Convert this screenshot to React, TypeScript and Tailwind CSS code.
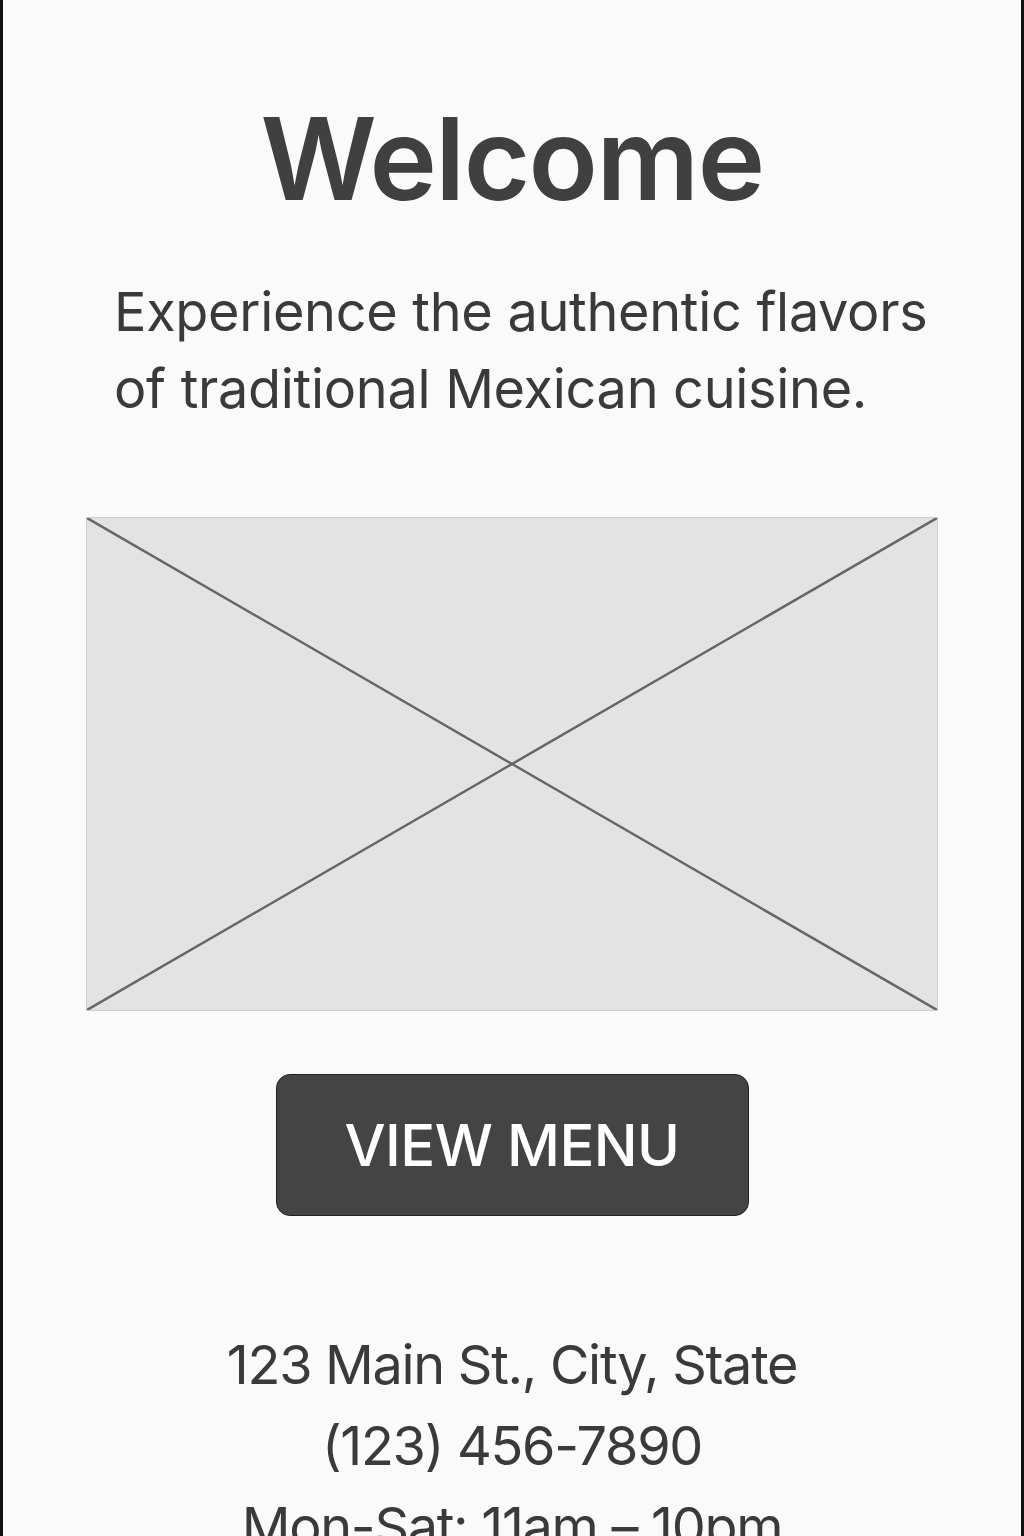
import React from 'react';

const PlaceholderImage: React.FC = () => (
  <div className="relative w-[852px] h-[494px] bg-[#e3e3e3] border border-[#cdcdcd]">
    <svg
      className="absolute inset-0 w-full h-full"
      viewBox="0 0 852 494"
      preserveAspectRatio="none"
    >
      <line x1="0" y1="0" x2="852" y2="494" stroke="#666" strokeWidth="2.5" />
      <line x1="852" y1="0" x2="0" y2="494" stroke="#666" strokeWidth="2.5" />
    </svg>
  </div>
);

const App: React.FC = () => {
  return (
    <div
      className="w-[1024px] h-[1536px] overflow-hidden bg-[#fafafa] border-x-[3px] border-[#111] text-[#3a3a3a]"
      style={{ fontFamily: 'Inter, "Noto Sans", sans-serif' }}
    >
      <div className="flex flex-col items-center pt-[102px]">
        {/* Title */}
        <h1 className="text-[114px] leading-none font-semibold text-[#404040] tracking-[-1.5px]">
          Welcome
        </h1>

        {/* Intro */}
        <p className="self-start ml-[111px] mt-[57px] w-[830px] text-[54px] leading-[77px] font-normal tracking-[-0.3px]">
          Experience the authentic flavors of traditional Mexican cuisine.
        </p>

        {/* Hero image placeholder */}
        <div className="mt-[90px]">
          <PlaceholderImage />
        </div>

        {/* Button */}
        <button
          type="button"
          className="mt-[63px] w-[473px] h-[142px] rounded-[14px] bg-[#444444] border border-[#222] text-white text-[58px] font-medium tracking-[-0.6px] flex items-center justify-center"
        >
          VIEW MENU
        </button>

        {/* Contact */}
        <div className="mt-[108px] text-center text-[54px] leading-[81px] tracking-[-1.3px]">
          <div>123 Main St., City, State</div>
          <div>(123) 456-7890</div>
          <div>Mon-Sat: 11am – 10pm</div>
        </div>
      </div>
    </div>
  );
};

export default App;
